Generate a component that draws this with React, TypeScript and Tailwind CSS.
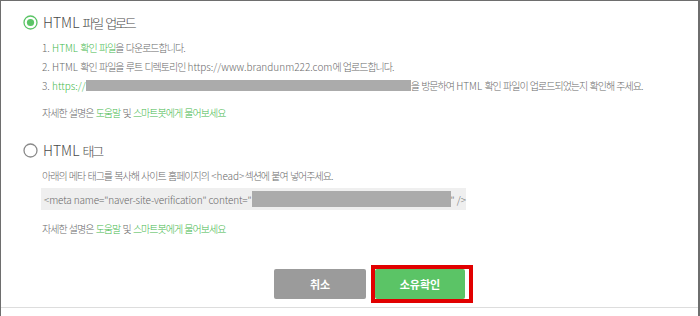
const KO = /([\uAC00-\uD7A3]+)/;

function T({ s, big }: { s: string; big?: boolean }) {
  return (
    <>
      {s.split(KO).map((p, i) =>
        i % 2 === 1 ? (
          <span
            key={i}
            className={big ? "text-[13px] tracking-[-2.2px]" : "text-[10px] tracking-[-1px]"}
          >
            {p}
          </span>
        ) : (
          p
        )
      )}
    </>
  );
}

function G({ s }: { s: string }) {
  return (
    <span className="text-[#45b94c]">
      <T s={s} />
    </span>
  );
}

function Radio({ on }: { on?: boolean }) {
  return (
    <svg width="15" height="15" viewBox="0 0 15 15" className="shrink-0">
      <circle
        cx="7.5"
        cy="7.5"
        r="6.5"
        fill="white"
        stroke={on ? "#5bc466" : "#8a8a8a"}
        strokeWidth="1.3"
      />
      {on && <circle cx="7.5" cy="7.5" r="3.6" fill="#5bc466" />}
    </svg>
  );
}

function Help() {
  return (
    <div className="h-[19px] leading-[19px]">
      <T s="자세한 설명은 " />
      <G s="도움말" />
      <T s=" 및 " />
      <G s="스마트봇에게 물어보세요" />
    </div>
  );
}

export default function App() {
  return (
    <div className="w-[700px] h-[316px] bg-white overflow-hidden font-['Noto_Sans_CJK_KR',sans-serif] font-light">
      <div className="h-[316px] border-l border-t border-r-2 border-[#6e6e6e] flex flex-col">
        <div className="pl-[22px] pt-[11px] flex flex-col">
          {/* HTML 파일 업로드 */}
          <div className="h-[20px] flex items-center gap-[5px] text-[14px] text-[#4a4a4a]">
            <Radio on />
            <span className="whitespace-nowrap">
              <T s="HTML 파일 업로드" big />
            </span>
          </div>

          <div className="ml-[19px] mt-[6px] text-[10px] text-[#6a6a6a] whitespace-nowrap">
            <div className="h-[19px] leading-[19px]">
              1. <G s="HTML 확인 파일" />
              <T s="을 다운로드합니다." />
            </div>
            <div className="h-[19px] leading-[19px]">
              <T s="2. HTML 확인 파일을 루트 디렉토리인 https://www.brandunm222.com에 업로드합니다." />
            </div>
            <div className="h-[19px] leading-[19px]">
              3. <G s="https://" />
              <span className="inline-block w-[325px] h-[11px] bg-[#ababab] align-[-1px]" />
              <T s="을 방문하여 HTML 확인 파일이 업로드되었는지 확인해 주세요." />
            </div>
            <div className="mt-[8px]">
              <Help />
            </div>
          </div>

          {/* HTML 태그 */}
          <div className="mt-[18px] h-[20px] flex items-center gap-[5px] text-[14px] text-[#4a4a4a]">
            <Radio />
            <span className="whitespace-nowrap">
              <T s="HTML 태그" big />
            </span>
          </div>

          <div className="ml-[19px] mt-[6px] text-[10px] text-[#6a6a6a] whitespace-nowrap">
            <div className="h-[19px] leading-[19px]">
              <T s="아래의 메타 태그를 복사해 사이트 홈페이지의 <head>섹션에 붙여 넣어주세요." />
            </div>
            <div className="mt-[3px] -ml-[1px] w-[425px] h-[22px] bg-[#efefef] flex items-center pl-[3px]">
              <span className="shrink-0 tracking-[-0.15px]">
                &lt;meta name="naver-site-verification" content="
              </span>
              <span className="shrink-0 w-[199px] h-[16px] bg-[#ababab]" />
              <span className="shrink-0">" /&gt;</span>
            </div>
            <div className="mt-[9px]">
              <Help />
            </div>
          </div>

          {/* Buttons */}
          <div className="mt-[27px] flex items-center pl-[251px] gap-[5px]">
            <button className="w-[92px] h-[30px] rounded-[2px] bg-[#9b9b9b] text-white text-[11px] font-bold">
              취소
            </button>
            <div className="w-[102px] h-[38px] border-4 border-[#e10000] flex items-center">
              <button className="w-[90px] h-[30px] rounded-[2px] bg-[#5bc466] text-white text-[11px] font-bold">
                소유확인
              </button>
            </div>
          </div>
        </div>
        <div className="mt-[4px] border-t border-[#dddddd]" />
      </div>
    </div>
  );
}
